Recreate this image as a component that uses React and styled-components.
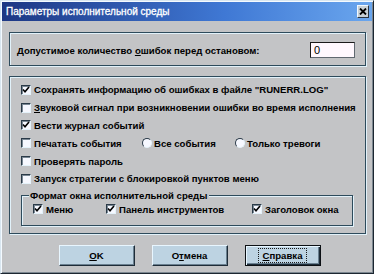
import React from 'react';
import styled, { createGlobalStyle } from 'styled-components';

const GlobalStyle = createGlobalStyle`
  html, body {
    margin: 0;
    padding: 0;
    background: #c3c4c6;
  }
  * {
    box-sizing: border-box;
  }
`;

const Window = styled.div`
  width: 374px;
  height: 274px;
  background: #c3c4c6;
  border: 1px solid;
  border-color: #d8e6f0 #1c2630 #1c2630 #d8e6f0;
  box-shadow: inset 1px 1px 0 #f4faff, inset -1px -1px 0 #7c8790;
  padding: 1px;
  font-family: "Liberation Sans", Arial, sans-serif;
  font-weight: bold;
  font-size: 9.6px;
  color: #000;
  display: flex;
  flex-direction: column;
`;

const TitleBar = styled.div`
  height: 19px;
  display: flex;
  align-items: center;
  justify-content: space-between;
  padding: 0 3px 0 4px;
  background: linear-gradient(to right, #1d3784, #3f78d4 60%, #6aa6ee);
`;

const Title = styled.span`
  color: #fff;
  font-size: 10px;
  font-weight: normal;
  -webkit-text-stroke: 0.3px #fff;
`;

const CloseButton = styled.div`
  width: 12px;
  height: 13px;
  background: #c8d0d6;
  border: 1px solid;
  border-color: #f0f8ff #2a3440 #2a3440 #f0f8ff;
  display: grid;
  place-content: center;
`;

const Content = styled.div`
  flex: 1;
  display: flex;
  flex-direction: column;
  padding: 11px 6px 0 7px;
`;

const Group = styled.div`
  border: 1px solid #2e4b5c;
  box-shadow: inset 1px 1px 0 #e2f2fa, 1px 1px 0 #e2f2fa;
  margin-bottom: ${(p) => p.$mb || 0}px;
`;

const LimitGroup = styled(Group)`
  height: 34px;
  display: flex;
  align-items: center;
  justify-content: space-between;
  padding: 2px 10px 0 7px;
`;

const NumberBox = styled.div`
  width: 45px;
  height: 16px;
  background: #fff8fe;
  border: 1px solid;
  border-color: #1a1a1a #606870 #606870 #1a1a1a;
  padding: 1px 3px;
  font-size: 11px;
  font-weight: normal;
  line-height: 13px;
`;

const OptionsGroup = styled(Group)`
  height: 158px;
  padding: 4px 12px 0 11px;
  display: flex;
  flex-direction: column;
`;

const Row = styled.div`
  height: 17.8px;
  display: flex;
  align-items: center;
`;

const Cell = styled.div`
  width: ${(p) => (p.$w ? `${p.$w}px` : 'auto')};
  display: flex;
  align-items: center;
  gap: ${(p) => p.$gap ?? 3}px;
  white-space: nowrap;
`;

const Box = styled.span`
  width: 10px;
  height: 10px;
  flex: none;
  background: #f6f8ff;
  border: 1px solid;
  border-color: #2a3a48 #e4f2fa #e4f2fa #2a3a48;
  box-shadow: inset 1px 1px 0 #7a8894;
  display: grid;
  place-content: center;
`;

const Round = styled.span`
  width: 10px;
  height: 10px;
  flex: none;
  border-radius: 50%;
  background: #f6f8ff;
  border: 1px solid;
  border-color: #2a3a48 #e4f2fa #e4f2fa #2a3a48;
`;

const Mnemonic = styled.span`
  text-decoration: underline;
  text-underline-offset: 1px;
`;

const Frame = styled.fieldset`
  margin: 2px 0 0;
  padding: 3px 0 0 11px;
  height: 36px;
  border: 1px solid #2e4b5c;
  box-shadow: inset 1px 1px 0 #e2f2fa, 1px 1px 0 #e2f2fa;
  display: flex;
  align-items: center;
`;

const Legend = styled.legend`
  padding: 0 2px 0 1px;
  margin-left: -4px;
  background: #c3c4c6;
  line-height: 11px;
`;

const Buttons = styled.div`
  display: flex;
  justify-content: center;
  gap: 17px;
  padding: 11px 0 0 4px;
`;

const Button = styled.div`
  width: 76px;
  height: 21px;
  display: grid;
  place-content: center;
  background: #bdd3e2;
  border: 1px solid;
  border-color: ${(p) => (p.$default ? '#0c1014' : '#e8f6ff #1e2c38 #1e2c38 #e8f6ff')};
  box-shadow: ${(p) =>
    p.$default
      ? 'inset 1px 1px 0 #e8f6ff, inset -1px -1px 0 #1e2c38, inset -2px -2px 0 #6a8090'
      : 'inset -1px -1px 0 #6a8090'};
`;

const Focus = styled.span`
  border: 1px dotted #1a1a1a;
  padding: 1px 4px;
  line-height: 11px;
`;

const Check = () => (
  <svg width="8" height="8" viewBox="0 0 8 8">
    <path d="M1 3.5 L3 5.8 L7 1" stroke="#000" strokeWidth="1.6" fill="none" />
  </svg>
);

const CheckItem = ({ checked, children, w }) => (
  <Cell $w={w}>
    <Box>{checked && <Check />}</Box>
    <span>{children}</span>
  </Cell>
);

const RadioItem = ({ children, w }) => (
  <Cell $w={w} $gap={2}>
    <Round />
    <span>{children}</span>
  </Cell>
);

export default function App() {
  return (
    <>
      <GlobalStyle />
      <Window>
        <TitleBar>
          <Title>Параметры исполнительной среды</Title>
          <CloseButton>
            <svg width="8" height="7" viewBox="0 0 8 7">
              <path d="M1 0.5 L7 6.5 M7 0.5 L1 6.5" stroke="#000" strokeWidth="1.8" />
            </svg>
          </CloseButton>
        </TitleBar>
        <Content>
          <LimitGroup $mb={10}>
            <span>
              Допустимое количество <Mnemonic>о</Mnemonic>шибок перед остановом:
            </span>
            <NumberBox>0</NumberBox>
          </LimitGroup>
          <OptionsGroup>
            <Row>
              <CheckItem checked>Сохранять информацию об ошибках в файле "RUNERR.LOG"</CheckItem>
            </Row>
            <Row>
              <CheckItem>
                <Mnemonic>З</Mnemonic>вуковой сигнал при возникновении ошибки во время исполнения
              </CheckItem>
            </Row>
            <Row>
              <CheckItem checked>Вести журнал событий</CheckItem>
            </Row>
            <Row>
              <CheckItem w={121}>Печатать события</CheckItem>
              <RadioItem w={93}>Все события</RadioItem>
              <RadioItem>Только тревоги</RadioItem>
            </Row>
            <Row>
              <CheckItem>Проверять пароль</CheckItem>
            </Row>
            <Row>
              <CheckItem>Запуск стратегии с блокировкой пунктов меню</CheckItem>
            </Row>
            <Frame>
              <Legend>Формат окна исполнительной среды</Legend>
              <CheckItem checked w={73}>Меню</CheckItem>
              <CheckItem checked w={146}>Панель инструментов</CheckItem>
              <CheckItem checked>Заголовок окна</CheckItem>
            </Frame>
          </OptionsGroup>
          <Buttons>
            <Button>
              <span>
                <Mnemonic>О</Mnemonic>K
              </span>
            </Button>
            <Button>
              <span>
                О<Mnemonic>т</Mnemonic>мена
              </span>
            </Button>
            <Button $default>
              <Focus>
                <Mnemonic>С</Mnemonic>правка
              </Focus>
            </Button>
          </Buttons>
        </Content>
      </Window>
    </>
  );
}
